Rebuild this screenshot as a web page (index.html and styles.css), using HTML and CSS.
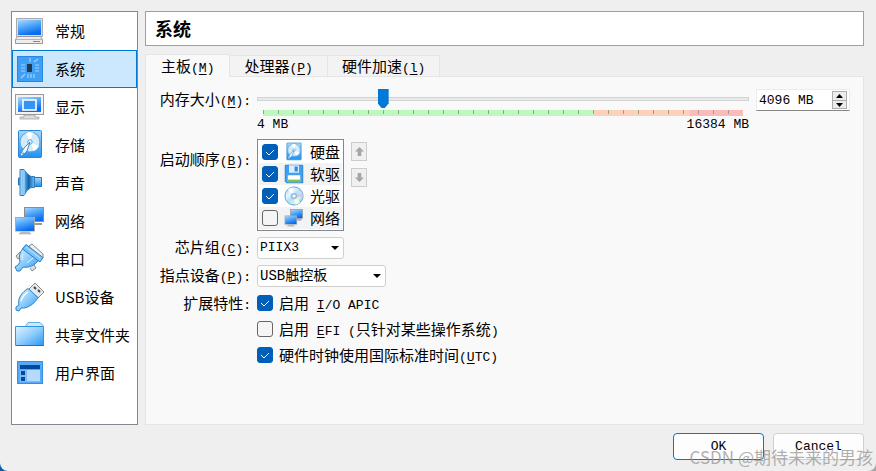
FILE: index.html
```html
<!DOCTYPE html>
<html lang="zh-CN">
<head>
    <meta charset="UTF-8">
    <title>系统</title>
    <link rel="stylesheet" href="styles.css">
</head>
<body>
    <svg class="icon-defs" width="0" height="0" aria-hidden="true">
        <defs>
            <linearGradient id="blue" x1="0" y1="0" x2="0.4" y2="1">
                <stop offset="0" stop-color="#a8d8ff"/>
                <stop offset="0.5" stop-color="#4fa6f8"/>
                <stop offset="1" stop-color="#0a6cf0"/>
            </linearGradient>
            <linearGradient id="sky" x1="0" y1="0" x2="0" y2="1">
                <stop offset="0" stop-color="#a9dafc"/>
                <stop offset="1" stop-color="#1f8ff0"/>
            </linearGradient>
            <linearGradient id="light" x1="0" y1="0" x2="1" y2="1">
                <stop offset="0" stop-color="#e2f4ff"/>
                <stop offset="0.5" stop-color="#8fcdfc"/>
                <stop offset="1" stop-color="#2896f5"/>
            </linearGradient>
            <linearGradient id="side" x1="0" y1="0" x2="1" y2="0">
                <stop offset="0" stop-color="#b8e2fc"/>
                <stop offset="0.3" stop-color="#5cb0ee"/>
                <stop offset="0.6" stop-color="#1260a8"/>
                <stop offset="1" stop-color="#6cc0fa"/>
            </linearGradient>
            <linearGradient id="rainbow" x1="0" y1="0" x2="1" y2="1">
                <stop offset="0" stop-color="#8cc8fa"/>
                <stop offset="0.3" stop-color="#e8f6ff"/>
                <stop offset="0.5" stop-color="#b4e0f8"/>
                <stop offset="0.7" stop-color="#d8f8c8"/>
                <stop offset="1" stop-color="#5aa6f0"/>
            </linearGradient>
        </defs>
        <symbol id="icon-disk" viewBox="0 0 32 32">
            <rect x="4.500" y="1.500" width="23" height="27" rx="1" fill="url(#sky)" stroke="#2d86cf"/>
            <circle cx="16" cy="13" r="10" fill="#d3ebfb" stroke="#5aa3dd"/>
            <path d="M16 13L12 4a10 10 0 0 1 7-.5zM16 13l9 4a10 10 0 0 1-5 5z" fill="#fff"/>
            <circle cx="16" cy="13" r="2.200" fill="#fff" stroke="#4f9fdd"/>
            <path d="M6 26l4-7 6-6-3 9-5 5z" fill="#f2faff" stroke="#3e8fd3"/>
            <circle cx="9" cy="24.500" r="1" fill="#4f9fdd"/>
        </symbol>
        <symbol id="icon-network" viewBox="0 0 32 32">
            <rect x="10.500" y="2.500" width="19" height="14" fill="url(#blue)" stroke="#8c8c8c"/>
            <path d="M21 18h7v2h-7z" fill="#999"/>
            <rect x="1.500" y="12.500" width="19" height="14" fill="url(#blue)" stroke="#aaa"/>
            <path d="M1 26.500h20" stroke="#d5d5d5"/>
            <path d="M7 27h8l2 2H5z" fill="#c5c5c5" stroke="#999" stroke-width=".5"/>
        </symbol>
    </svg>

    <div class="dialog">
        <div class="content">
            <nav class="sidebar">
                <a href="#general">
                    <svg viewBox="0 0 32 32">
                        <path d="M2.500 3.500h26v18h-26z" fill="#ddd" stroke="#aaa"/>
                        <path d="M4 5h23v15H4z" fill="url(#blue)"/>
                        <path d="M1.500 28.500v-4l2-3h23l2 3v4z" fill="#ededed" stroke="#999"/>
                        <path d="M2 24.500h26" stroke="#b5b5b5"/>
                        <path d="M19 26.500h7" stroke="#888"/>
                    </svg>常规</a>
                <a href="#system" class="selected">
                    <svg viewBox="0 0 32 32">
                        <rect x="3.500" y="3.500" width="25" height="25" fill="#3ea0f5" stroke="#2587df"/>
                        <rect x="13" y="11" width="5" height="8" fill="#26384d"/>
                        <path d="M16 5v4M20 9l4-3M21 12h4M21 15h4M21 18h4M7 12h4M7 15h4M7 18h4M11 21l-4 4M14 21v4M17 21v4M20 21v4" stroke="#a3d2ff" stroke-width="1.200"/>
                    </svg>系统</a>
                <a href="#display">
                    <svg viewBox="0 0 32 32">
                        <rect x="1.500" y="3.500" width="28" height="20" fill="#f3f3f3" stroke="#999"/>
                        <path d="M4 6h23v15H4z" fill="url(#blue)"/>
                        <rect x="9" y="9" width="13" height="10" fill="#3393f6" stroke="#fff" stroke-width="1.600"/>
                        <path d="M10 24h11v2h4v2H6v-2h4z" fill="#ddd" stroke="#999" stroke-width=".7"/>
                    </svg>显示</a>
                <a href="#storage">
                    <svg><use href="#icon-disk"/></svg>存储</a>
                <a href="#audio">
                    <svg viewBox="0 0 32 32">
                        <path d="M6 11H4.500v7H6" fill="#5aa9e0" stroke="#2a75b8"/>
                        <path d="M20 10.500h7.500v9H20z" fill="url(#sky)" stroke="#2275bd"/>
                        <path d="M6 2.500h4l3 4 4 3h3.500v11H17l-4 3-3 5H6z" fill="url(#side)" stroke="#2b80c4"/>
                        <path d="M10 3v25" stroke="#d3eefd" stroke-width=".7"/>
                    </svg>声音</a>
                <a href="#network">
                    <svg><use href="#icon-network"/></svg>网络</a>
                <a href="#serial">
                    <svg viewBox="0 0 32 32">
                        <path d="M15 3l3-2 11 10v4l-4 1z" fill="#eee" stroke="#888"/>
                        <path d="M6 9l-4 4 2 3 3-2M16 25l2 3 4-3-2-3" fill="#ddd" stroke="#888"/>
                        <path d="M10 4c-3 4-6 8-4 15l-2 3-3 2 2 4h3l3-4c6 1 11-1 16-7z" fill="url(#light)" stroke="#2a7fc4"/>
                        <path d="M12 1.500l17 13-3 4.500L8.500 6z" fill="#7fc4f8" stroke="#2a7fc4"/>
                        <path d="M12 4l14 11" stroke="#bfe4fd"/>
                        <path d="M9 11c-1 2-1 4 0 6M13 20l6-5" fill="none" stroke="#e5f6ff"/>
                    </svg>串口</a>
                <a href="#usb">
                    <svg viewBox="0 0 32 32">
                        <path d="M15 8l6-6 9 9-6 6z" fill="#e8e8e8" stroke="#888"/>
                        <path d="M20 6l2 2M24 9l2 2" stroke="#444" stroke-width="2"/>
                        <path d="M2 26l3-2C3 18 8 11 14 7.500l10 9C21 22 14 28 7 27l-2 3-3-1z" fill="url(#light)" stroke="#2a86cc"/>
                        <path d="M7 20c1-4 4-7 7-9" fill="none" stroke="#fff" stroke-width="1.500"/>
                    </svg>USB设备</a>
                <a href="#shared">
                    <svg viewBox="0 0 32 32">
                        <path d="M11 8l3-4.500h12L29.500 7v4H11z" fill="#c6eafb" stroke="#62afe0"/>
                        <path d="M1.500 7.500h28v19h-28z" fill="url(#light)" stroke="#3794dc"/>
                        <path d="M2 26.500h28" stroke="#1873cc"/>
                    </svg>共享文件夹</a>
                <a href="#interface">
                    <svg viewBox="0 0 32 32">
                        <rect x="3.500" y="4.500" width="25" height="22" fill="#55a9f5" stroke="#3490e0"/>
                        <path d="M6 8h20v4H6z" fill="#0348a0"/>
                        <path d="M6 13h20v12H6z" fill="#7bbcf9"/>
                        <path d="M13 13h13v11H13z" fill="#b6dafb"/>
                        <path d="M7 14h4v4H7zM7 20h4v4H7z" fill="#0348a0"/>
                    </svg>用户界面</a>
            </nav>

            <main class="main">
                <h1>系统</h1>
                <div class="tabs" role="tablist">
                    <button class="tab active" role="tab" aria-selected="true">主板<span class="en">(<u>M</u>)</span></button>
                    <button class="tab" role="tab">处理器<span class="en">(<u>P</u>)</span></button>
                    <button class="tab" role="tab">硬件加速<span class="en">(<u>l</u>)</span></button>
                </div>

                <div class="panel" role="tabpanel">
                    <label class="name" for="memory">内存大小<span class="en">(<u>M</u>):</span></label>
                    <div class="memory">
                        <div class="slider">
                            <input type="range" id="memory" min="4" max="16384" value="4096">
                            <div class="scale"></div>
                            <div class="limits en"><span>4 MB</span><span>16384 MB</span></div>
                        </div>
                        <div class="spinbox">
                            <input type="text" class="en" value="4096 MB" aria-label="内存大小">
                            <div class="steps">
                                <button aria-label="增加"><svg viewBox="0 0 7 4"><path d="M0 4h7L3.500 0z"/></svg></button>
                                <button aria-label="减少"><svg viewBox="0 0 7 4"><path d="M0 0h7L3.500 4z"/></svg></button>
                            </div>
                        </div>
                    </div>

                    <span class="name boot-name">启动顺序<span class="en">(<u>B</u>):</span></span>
                    <div class="boot">
                        <div class="boot-list">
                            <label><input type="checkbox" checked><svg><use href="#icon-disk"/></svg>硬盘</label>
                            <label><input type="checkbox" checked>
                                <svg viewBox="0 0 32 32">
                                    <path d="M2 2h28v28H4l-2-2z" fill="#3f9ff2" stroke="#287fca" stroke-width="1.500"/>
                                    <path d="M8 2h16v12H8z" fill="#d9edfc"/>
                                    <path d="M17 4h5v8h-5z" fill="#3989d8"/>
                                    <path d="M6 18h20v11H6z" fill="#fff"/>
                                    <path d="M6 25h20v4H6z" fill="#79c34d"/>
                                </svg>软驱</label>
                            <label><input type="checkbox" checked>
                                <svg viewBox="0 0 32 32">
                                    <circle cx="16" cy="16" r="14.500" fill="url(#rainbow)" stroke="#5d9fdc" stroke-width="1.500"/>
                                    <path d="M16 16L6 6a14 14 0 0 1 8-4zM16 16l10 10a14 14 0 0 1-8 4z" fill="#fff" opacity=".8"/>
                                    <path d="M16 16l13-5a14 14 0 0 1 1 7z" fill="#d6c4f5"/>
                                    <circle cx="16" cy="16" r="5" fill="#8fb8e6"/>
                                    <circle cx="16" cy="16" r="2.500" fill="#fff"/>
                                </svg>光驱</label>
                            <label><input type="checkbox"><svg><use href="#icon-network"/></svg>网络</label>
                        </div>
                        <div class="move">
                            <button aria-label="上移" disabled><svg viewBox="0 0 10 10"><path d="M5 0l5 5H7v5H3V5H0z"/></svg></button>
                            <button aria-label="下移" disabled><svg viewBox="0 0 10 10"><path d="M5 10l5-5H7V0H3v5H0z"/></svg></button>
                        </div>
                    </div>

                    <label class="name" for="chipset">芯片组<span class="en">(<u>C</u>):</span></label>
                    <select id="chipset" class="chipset">
                        <option>PIIX3</option>
                        <option>ICH9</option>
                    </select>

                    <label class="name" for="pointing">指点设备<span class="en">(<u>P</u>):</span></label>
                    <select id="pointing" class="pointing">
                        <option>USB触控板</option>
                    </select>

                    <span class="name">扩展特性<span class="en">:</span></span>
                    <div class="features">
                        <label><input type="checkbox" checked><span>启用<span class="en"> <u>I</u>/O APIC</span></span></label>
                        <label><input type="checkbox"><span>启用<span class="en"> <u>E</u>FI (</span>只针对某些操作系统<span class="en">)</span></span></label>
                        <label><input type="checkbox" checked><span>硬件时钟使用国际标准时间<span class="en">(<u>U</u>TC)</span></span></label>
                    </div>
                </div>
            </main>
        </div>

        <footer class="footer">
            <button class="default">OK</button>
            <button>Cancel</button>
        </footer>
        <div class="watermark">CSDN @期待未来的男孩</div>
    </div>
</body>
</html>
```
FILE: styles.css
```css
* {
    box-sizing: border-box;
}

body {
    margin: 0;
    background: linear-gradient(to right, #0b5ca8 50%, #a8a8a8 50%);
    font-family: "Noto Sans CJK SC", sans-serif;
    font-size: 15px;
    line-height: 20px;
    color: #000;
}

button, input, select {
    font: inherit;
    color: inherit;
    margin: 0;
    padding: 0;
}

.icon-defs {
    position: absolute;
}

.en {
    font-family: "Liberation Mono", monospace;
    font-size: 13px;
    line-height: 13px;
    white-space: pre;
}

u {
    text-underline-offset: 2px;
}

.dialog {
    position: relative;
    display: flex;
    flex-direction: column;
    gap: 8px;
    min-height: 100vh;
    padding: 11px 12px 11px 11px;
    background: #efefef;
    border-radius: 0 0 8px 8px;
}

.content {
    flex: 1;
    display: flex;
    gap: 7px;
}

/* category list */
.sidebar {
    flex: none;
    width: 127px;
    background: #fff;
    border: 1px solid #828790;
}

.sidebar a {
    display: flex;
    align-items: center;
    gap: 9px;
    height: 38px;
    padding-left: 1px;
    border: 1px solid transparent;
    color: #000;
    text-decoration: none;
    white-space: nowrap;
}

.sidebar a.selected {
    background: #cce8ff;
    border-color: #0078d7;
}

.sidebar svg {
    flex: none;
    width: 32px;
    height: 32px;
}

.main {
    flex: 1;
    display: flex;
    flex-direction: column;
    min-width: 0;
}

h1 {
    margin: 0 0 8px;
    padding: 6px 9px;
    background: #fff;
    border: 1px solid #a0a0a0;
    font-size: 18px;
    line-height: 21px;
}

/* tabs */
.tabs {
    display: flex;
    align-items: flex-end;
}

.tab {
    height: 21px;
    padding: 0 14px;
    background: #f3f3f3;
    border: 1px solid #e5e5e5;
    border-bottom: 0;
    border-left: 0;
    line-height: 20px;
}

.tab.active {
    height: 23px;
    margin-bottom: -1px;
    padding: 0 15px 1px;
    background: #f9f9f9;
    border-left: 1px solid #e5e5e5;
    z-index: 1;
}

.panel {
    flex: 1;
    display: grid;
    grid-template-columns: 105px 1fr;
    align-content: start;
    justify-items: start;
    gap: 6px;
    padding: 12px 13px 12px 0;
    background: #f9f9f9;
    border: 1px solid #e5e5e5;
}

.name {
    justify-self: end;
    white-space: nowrap;
}

.boot-name {
    padding-top: 10px;
}

/* memory */
.memory {
    display: flex;
    gap: 7px;
    justify-self: stretch;
}

.slider {
    flex: 1;
    display: flex;
    flex-direction: column;
}

.slider input {
    appearance: none;
    width: 100%;
    height: 20px;
    background: transparent;
}

.slider input::-webkit-slider-runnable-track {
    height: 4px;
    background: #e7eaea;
    border: 1px solid #d3d3d3;
}

.slider input::-webkit-slider-thumb {
    appearance: none;
    width: 11px;
    height: 19px;
    margin-top: -9px;
    background: #0078d7;
    clip-path: polygon(0 0, 100% 0, 100% 75%, 65% 100%, 35% 100%, 0 75%);
}

.scale {
    height: 6px;
    margin: 1px 6px 0;
    background:
        repeating-linear-gradient(to right, #9ba094 0 1px, transparent 1px 15px) 0 0 / 100% 4px no-repeat,
        linear-gradient(to right, #bdf8bd 69%, #fcd0bb 69% 89%, #fcbbbb 89%);
}

.limits {
    display: flex;
    justify-content: space-between;
    line-height: 17px;
}

.spinbox {
    display: flex;
    align-items: center;
    width: 94px;
    height: 22px;
    padding: 2px;
    background: #fff;
    border: 1px solid #ececec;
    border-bottom-color: #868686;
}

.spinbox input {
    flex: 1;
    min-width: 0;
    border: 0;
    background: transparent;
}

.steps {
    display: flex;
    flex-direction: column;
    width: 15px;
    border: 1px solid #adadad;
}

.steps button {
    display: flex;
    align-items: center;
    justify-content: center;
    height: 8px;
    background: #ececec;
    border: 0;
}

.steps button + button {
    border-top: 1px solid #adadad;
}

.steps svg {
    width: 7px;
    height: 4px;
}

/* boot order */
.boot {
    display: flex;
    gap: 7px;
}

.boot-list {
    padding: 1px;
    background: #fff;
    border: 1px solid #828790;
}

.boot-list label {
    display: flex;
    align-items: center;
    height: 22px;
    padding: 0 2px 0 3px;
}

.boot-list label:nth-child(even) {
    background: #f3f3f3;
}

.boot-list svg {
    width: 20px;
    height: 20px;
    margin: 0 6px;
}

input[type="checkbox"] {
    appearance: none;
    flex: none;
    width: 16px;
    height: 16px;
    background: #f5f5f5;
    border: 1px solid #666;
    border-radius: 3px;
}

input[type="checkbox"]:checked {
    background: #005fb8 url("data:image/svg+xml,%3Csvg xmlns='http://www.w3.org/2000/svg' viewBox='0 0 14 14'%3E%3Cpath d='M3 7l3 3 5-5' fill='none' stroke='white'/%3E%3C/svg%3E") center / 14px;
    border-color: #005fb8;
}

.move {
    display: flex;
    flex-direction: column;
    gap: 7px;
    padding-top: 3px;
}

.move button {
    display: flex;
    align-items: center;
    justify-content: center;
    width: 16px;
    height: 19px;
    background: #f0f0f0;
    border: 1px solid #ccc;
}

.move svg {
    width: 9px;
    height: 9px;
    fill: #a5a5a5;
}

select {
    appearance: none;
    height: 22px;
    padding-left: 2px;
    background: #fff url("data:image/svg+xml,%3Csvg xmlns='http://www.w3.org/2000/svg' viewBox='0 0 8 4'%3E%3Cpath d='M0 0h8L4 4z'/%3E%3C/svg%3E") right 4px center / 8px 4px no-repeat;
    border: 1px solid #d0d0d0;
    border-radius: 3px;
    font-family: "Liberation Mono", "Noto Sans CJK SC", monospace;
}

.chipset {
    width: 87px;
    font-size: 13px;
}

.pointing {
    width: 129px;
    font-size: 14px;
}

.features {
    display: flex;
    flex-direction: column;
    gap: 6px;
}

.features label {
    display: flex;
    align-items: center;
    gap: 6px;
}

.footer {
    display: flex;
    justify-content: flex-end;
    gap: 9px;
}

.footer button {
    width: 91px;
    height: 27px;
    background: #fdfdfd;
    border: 1px solid #d0d0d0;
    border-radius: 4px;
    font-family: "Liberation Mono", monospace;
    font-size: 13px;
}

.footer .default {
    border-color: #0078d4;
}

.watermark {
    position: absolute;
    right: 3px;
    bottom: 4px;
    color: rgba(150, 150, 150, 0.75);
    font-size: 17px;
    pointer-events: none;
}
```
